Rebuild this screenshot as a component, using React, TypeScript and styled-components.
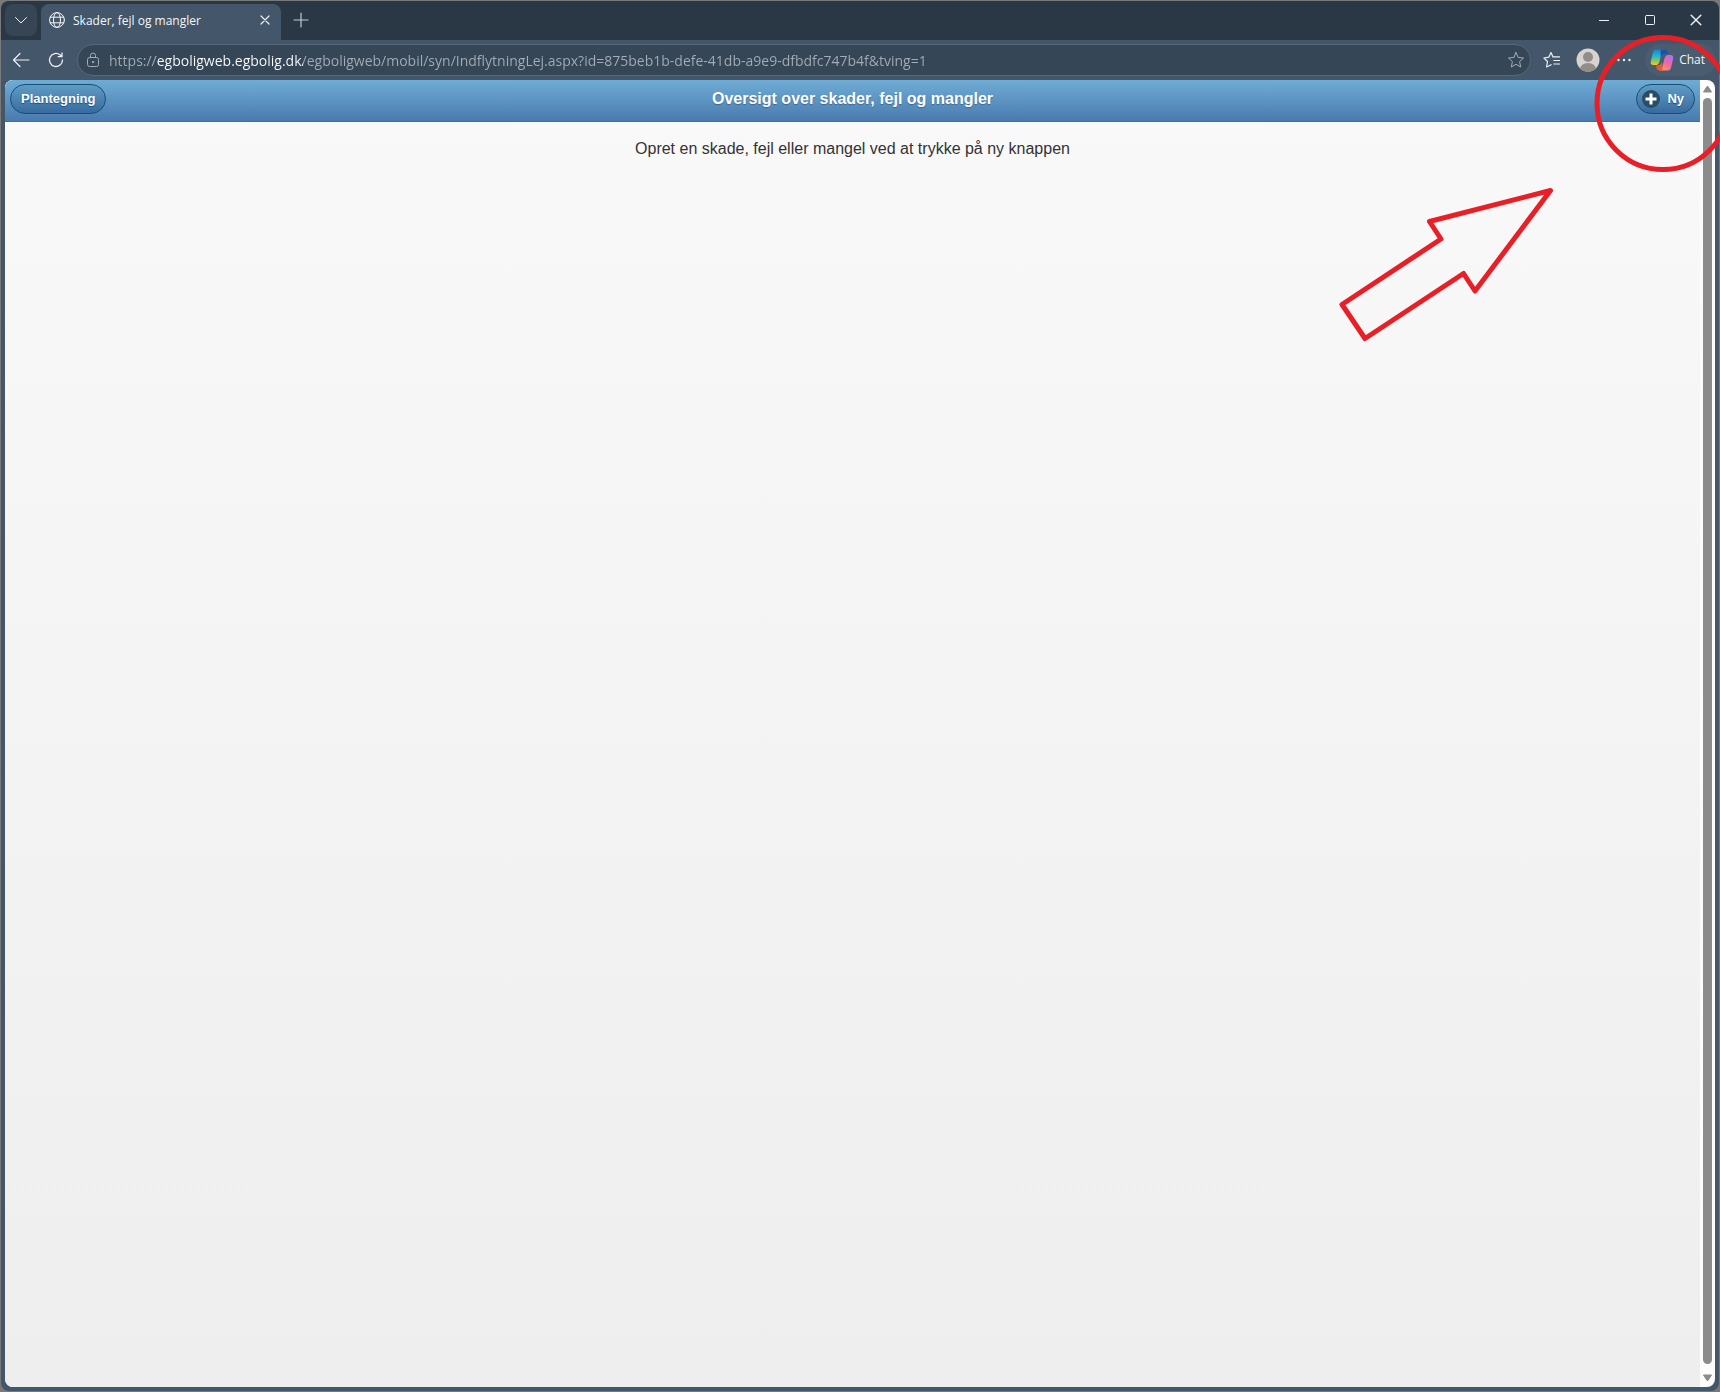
import React, { useState } from "react";
import styled, { createGlobalStyle } from "styled-components";

const GlobalStyle = createGlobalStyle`
  * { box-sizing: border-box; }
  body { margin: 0; background: #77797a; font-family: "Liberation Sans", Arial, sans-serif; }
  button, input { font: inherit; }
`;

const uiFont = `"Open Sans", "Segoe UI", sans-serif`;

const Window = styled.div`
  position: relative;
  display: flex;
  flex-direction: column;
  height: 100vh;
  padding: 1px;
  overflow: hidden;
`;

const Frame = styled.div`
  display: flex;
  flex-direction: column;
  flex: 1;
  min-height: 0;
  background: #43566a;
  border-radius: 8px;
  overflow: hidden;
`;

const TabStrip = styled.div`
  display: flex;
  align-items: flex-start;
  height: 39px;
  padding: 3px 0 0 4px;
  background: #2a3744;
`;

const IconButton = styled.button<{ $w: number; $h: number; $bg?: string; $color?: string }>`
  display: inline-flex;
  align-items: center;
  justify-content: center;
  flex: none;
  width: ${(p) => p.$w}px;
  height: ${(p) => p.$h}px;
  padding: 0;
  border: 0;
  border-radius: 8px;
  background: ${(p) => p.$bg ?? "transparent"};
  color: ${(p) => p.$color ?? "#eef1f4"};
`;

const Tab = styled.div`
  display: flex;
  align-items: center;
  flex: none;
  width: 240px;
  height: 36px;
  margin-left: 4px;
  padding: 0 4px 4px 8px;
  gap: 8px;
  border-radius: 8px 8px 0 0;
  background: #43566a;
  color: #f4f6f8;
  font: 12px/16px ${uiFont};
`;

const TabTitle = styled.span`
  flex: 1;
  padding-top: 2px;
`;

const WindowControls = styled.div`
  display: flex;
  margin-left: auto;
`;

const Toolbar = styled.div`
  display: flex;
  align-items: center;
  height: 40px;
  padding: 0 3px;
`;

const AddressBar = styled.label`
  display: flex;
  align-items: center;
  flex: 1;
  height: 32px;
  margin: 0 3px;
  padding: 0 5px 0 8px;
  gap: 9px;
  border: 1px solid #56687a;
  border-radius: 16px;
  background: #354657;
  color: #a3adb7;
`;

const AddressInput = styled.input`
  flex: 1;
  min-width: 0;
  padding: 2px 0 0;
  border: 0;
  outline: 0;
  color: #a3adb7;
  background: linear-gradient(90deg, #a3adb7 47px, #ffffff 47px 194px, #a3adb7 194px);
  background-clip: text;
  -webkit-background-clip: text;
  -webkit-text-fill-color: transparent;
  font: 14px/20px ${uiFont};
`;

const ToolbarGroup = styled.div`
  display: flex;
  align-items: center;
`;

const ChatButton = styled.button`
  display: flex;
  align-items: center;
  gap: 5px;
  height: 32px;
  margin-left: 3px;
  padding: 0 11px 0 5px;
  border: 0;
  border-radius: 16px;
  background: #4a5c6f;
  color: #f4f6f8;
  font: 12px/16px ${uiFont};
`;

const Viewport = styled.div`
  display: flex;
  flex: 1;
  min-height: 0;
  margin: 0 4px 4px;
  border-radius: 8px;
  overflow: hidden;
  background: #fcfcfc;
`;

const Page = styled.main`
  flex: 1;
  background: linear-gradient(#f9f9f9, #eeeeee);
`;

const Header = styled.header`
  display: grid;
  grid-template-columns: 1fr auto 1fr;
  align-items: center;
  height: 42px;
  padding: 0 5px 3px;
  border-bottom: 1px solid #456f9a;
  background: linear-gradient(#6facd5, #497bae);
  color: #ffffff;
`;

const Title = styled.h1`
  margin: 0;
  font-size: 16px;
  line-height: 20px;
  text-shadow: 0 1px 1px #3e6790;
`;

const PillButton = styled.button<{ $end?: boolean }>`
  display: flex;
  align-items: center;
  gap: 7px;
  justify-self: ${(p) => (p.$end ? "end" : "start")};
  height: 30px;
  padding: 0 10px 0 ${(p) => (p.$end ? 5 : 10)}px;
  border: 1px solid #145072;
  border-radius: 15px;
  background: linear-gradient(#5f9cc5, #396b9e);
  color: #ffffff;
  font-weight: bold;
  font-size: 13px;
  line-height: 16px;
  text-shadow: 0 1px 1px #194b7e;
`;

const Hint = styled.p`
  margin: 0;
  padding: 17px 15px;
  color: #333333;
  font-size: 16px;
  line-height: 20px;
  text-align: center;
`;

const ScrollBar = styled.div`
  display: flex;
  flex-direction: column;
  align-items: center;
  flex: none;
  width: 15px;
  padding: 6px 0;
  gap: 5px;
`;

const ScrollThumb = styled.div`
  flex: 1;
  width: 9px;
  margin-bottom: 5px;
  border-radius: 5px;
  background: #8b8b8b;
`;

const Annotation = styled.svg`
  position: absolute;
  top: 0;
  right: 0;
  pointer-events: none;
`;

const stroke = { fill: "none", stroke: "currentColor", strokeLinecap: "round", strokeLinejoin: "round" } as const;

const ChevronDown = () => (
  <svg width="16" height="16" viewBox="0 0 16 16" {...stroke}><path d="M2.5 5.5 8 11l5.500-5.500" /></svg>
);
const Globe = () => (
  <svg width="16" height="16" viewBox="0 0 16 16" {...stroke}>
    <circle cx="8" cy="8" r="7.400" /><ellipse cx="8" cy="8" rx="3.500" ry="7.400" /><path d="M1.300 5.200h13.400M1.300 10.800h13.400" />
  </svg>
);
const Cross = ({ size }: { size: number }) => (
  <svg width={size} height={size} viewBox="0 0 10 10" {...stroke} strokeWidth="1.200"><path d="m1 1 8 8M9 1 1 9" /></svg>
);
const Plus = () => (
  <svg width="16" height="16" viewBox="0 0 16 16" {...stroke} strokeWidth="1.200"><path d="M8 1v14M1 8h14" /></svg>
);
const BackArrow = () => (
  <svg width="18" height="16" viewBox="0 0 18 16" {...stroke} strokeWidth="1.200"><path d="M17 8H1.500M8 1.500 1.500 8 8 14.500" /></svg>
);
const Reload = () => (
  <svg width="16" height="16" viewBox="0 0 16 16" {...stroke} strokeWidth="1.300"><path d="M14.500 8A6.500 6.500 0 1 1 12.200 3L14 4.600M14 1v3.700h-3.800" /></svg>
);
const Lock = () => (
  <svg width="14" height="16" viewBox="0 0 14 16" {...stroke}>
    <rect x="1.500" y="5.500" width="11" height="9" rx="2" /><path d="M4.500 5.500V3.500a2.500 2.500 0 0 1 5 0v2" /><circle cx="7" cy="10" r=".7" fill="currentColor" />
  </svg>
);
const Star = () => (
  <svg width="18" height="18" viewBox="0 0 18 18" {...stroke}>
    <path d="m9 1.500 2.200 4.900 5.300.6-3.900 3.600 1.100 5.400L9 13.300 4.300 16l1.100-5.400L1.500 7l5.300-.6z" />
  </svg>
);
const Favorites = () => (
  <svg width="18" height="18" viewBox="0 0 18 18" {...stroke} strokeWidth="1.200">
    <path d="M9.800 5.400 8 1.500 5.800 6.200.9 7l3.600 3.500-.9 5.500L8.200 13.700M9.800 5.900h6.700M10.800 9.500h5.700M10.800 13h5.700" />
  </svg>
);
const Avatar = () => (
  <svg width="24" height="24" viewBox="0 0 24 24">
    <clipPath id="avatar"><circle cx="12" cy="12" r="11.500" /></clipPath>
    <g clipPath="url(#avatar)"><rect width="24" height="24" fill="#d6d3d0" /><circle cx="12" cy="9" r="5" fill="#928d88" /><ellipse cx="12" cy="21" rx="8" ry="6" fill="#928d88" /></g>
  </svg>
);
const Dots = () => (
  <svg width="16" height="16" viewBox="0 0 16 16" fill="currentColor"><circle cx="2.500" cy="8" r="1.200" /><circle cx="8" cy="8" r="1.200" /><circle cx="13.500" cy="8" r="1.200" /></svg>
);
const Copilot = () => (
  <svg width="24" height="22" viewBox="0 0 24 22">
    <defs>
      <linearGradient id="cool" x1="0" y1="0" x2="0" y2="1"><stop offset="0" stopColor="#1682d8" /><stop offset=".45" stopColor="#2ab6ce" /><stop offset=".75" stopColor="#8fc944" /><stop offset="1" stopColor="#f2cb2e" /></linearGradient>
      <linearGradient id="warm" x1=".8" y1="0" x2=".2" y2="1"><stop offset="0" stopColor="#a873ee" /><stop offset=".5" stopColor="#ed67a8" /><stop offset="1" stopColor="#ff9855" /></linearGradient>
    </defs>
    <path d="M6 .5h8.500c-2.500 1-3 4-4.500 10-.6 3-1.600 5.500-4 5.500H3.500C1 16 .3 14.500.9 12l2-8.500C3.500 1.500 4.500.5 6 .5z" fill="url(#cool)" />
    <path d="M11 .5h4c1.600 0 2.300 1.200 2.900 4.500H14c-1.500 0-2.200.8-3 3.500-.6-4-.8-6.500 0-8z" fill="#1753b5" />
    <path d="M18 21.500H9.500c2.500-1 3-4 4.500-10 .6-3 1.600-5.500 4-5.500h2.500c2.500 0 3.200 1.500 2.600 4l-2 8.500c-.6 2-1.600 3-3.100 3z" fill="url(#warm)" />
    <path d="M12 21.500H9c-1.600 0-2.300-1.200-2.900-5 2.400.3 4.400-.5 5.900-3.500.6 4 .8 7 0 8.500z" fill="#e9573d" />
  </svg>
);
const Minimize = () => (
  <svg width="10" height="10" viewBox="0 0 10 10" {...stroke}><path d="M.5 5.500h9" /></svg>
);
const Maximize = () => (
  <svg width="10" height="10" viewBox="0 0 10 10" {...stroke}><rect x=".5" y=".5" width="9" height="9" rx="1" /></svg>
);
const PlusBadge = () => (
  <svg width="18" height="18" viewBox="0 0 18 18"><circle cx="9" cy="9" r="9" fill="#294c68" /><path d="M9 3.500v11M3.500 9h11" stroke="#fff" strokeWidth="3" /></svg>
);
const Triangle = ({ down }: { down?: boolean }) => (
  <svg width="9" height="7" viewBox="0 0 9 7"><path d={down ? "M.5 1h8L5 6.500H4z" : "M.5 6h8L5 .5H4z"} fill="#8b8b8b" stroke="#8b8b8b" strokeLinejoin="round" /></svg>
);

export default function App() {
  const [url, setUrl] = useState(
    "https://egboligweb.egbolig.dk/egboligweb/mobil/syn/IndflytningLej.aspx?id=875beb1b-defe-41db-a9e9-dfbdfc747b4f&tving=1"
  );
  return (
    <>
      <GlobalStyle />
      <Window>
        <Frame>
          <TabStrip>
            <IconButton $w={32} $h={32} $bg="#374655" aria-label="Faner"><ChevronDown /></IconButton>
            <Tab>
              <Globe />
              <TabTitle>Skader, fejl og mangler</TabTitle>
              <IconButton $w={24} $h={24} aria-label="Luk fane"><Cross size={10} /></IconButton>
            </Tab>
            <IconButton $w={40} $h={32} $color="#c3cad1" aria-label="Ny fane"><Plus /></IconButton>
            <WindowControls>
              <IconButton $w={46} $h={32} aria-label="Minimer"><Minimize /></IconButton>
              <IconButton $w={46} $h={32} aria-label="Maksimer"><Maximize /></IconButton>
              <IconButton $w={46} $h={32} aria-label="Luk"><Cross size={12} /></IconButton>
            </WindowControls>
          </TabStrip>
          <Toolbar>
            <IconButton $w={34} $h={32} aria-label="Tilbage"><BackArrow /></IconButton>
            <IconButton $w={36} $h={32} aria-label="Opdater"><Reload /></IconButton>
            <AddressBar>
              <Lock />
              <AddressInput aria-label="Adresse" value={url} onChange={(e) => setUrl(e.target.value)} spellCheck={false} />
              <Star />
            </AddressBar>
            <ToolbarGroup>
              <IconButton $w={36} $h={32} aria-label="Favoritter"><Favorites /></IconButton>
              <IconButton $w={36} $h={32} aria-label="Profil"><Avatar /></IconButton>
              <IconButton $w={36} $h={32} aria-label="Flere"><Dots /></IconButton>
              <ChatButton><Copilot />Chat</ChatButton>
            </ToolbarGroup>
          </Toolbar>
          <Viewport>
            <Page>
              <Header>
                <PillButton>Plantegning</PillButton>
                <Title>Oversigt over skader, fejl og mangler</Title>
                <PillButton $end><PlusBadge />Ny</PillButton>
              </Header>
              <Hint>Opret en skade, fejl eller mangel ved at trykke på ny knappen</Hint>
            </Page>
            <ScrollBar>
              <Triangle />
              <ScrollThumb />
              <Triangle down />
            </ScrollBar>
          </Viewport>
        </Frame>
        <Annotation width="400" height="360" viewBox="1320 0 400 360" fill="none" stroke="#e81f27" strokeWidth="5" strokeLinejoin="round">
          <circle cx="1663" cy="103.500" r="66" />
          <path d="M1550.500 190.500 1429.500 221.500 1441 239 1342 304.500 1365 338.500 1463.500 273.500 1475 291z" />
        </Annotation>
      </Window>
    </>
  );
}
